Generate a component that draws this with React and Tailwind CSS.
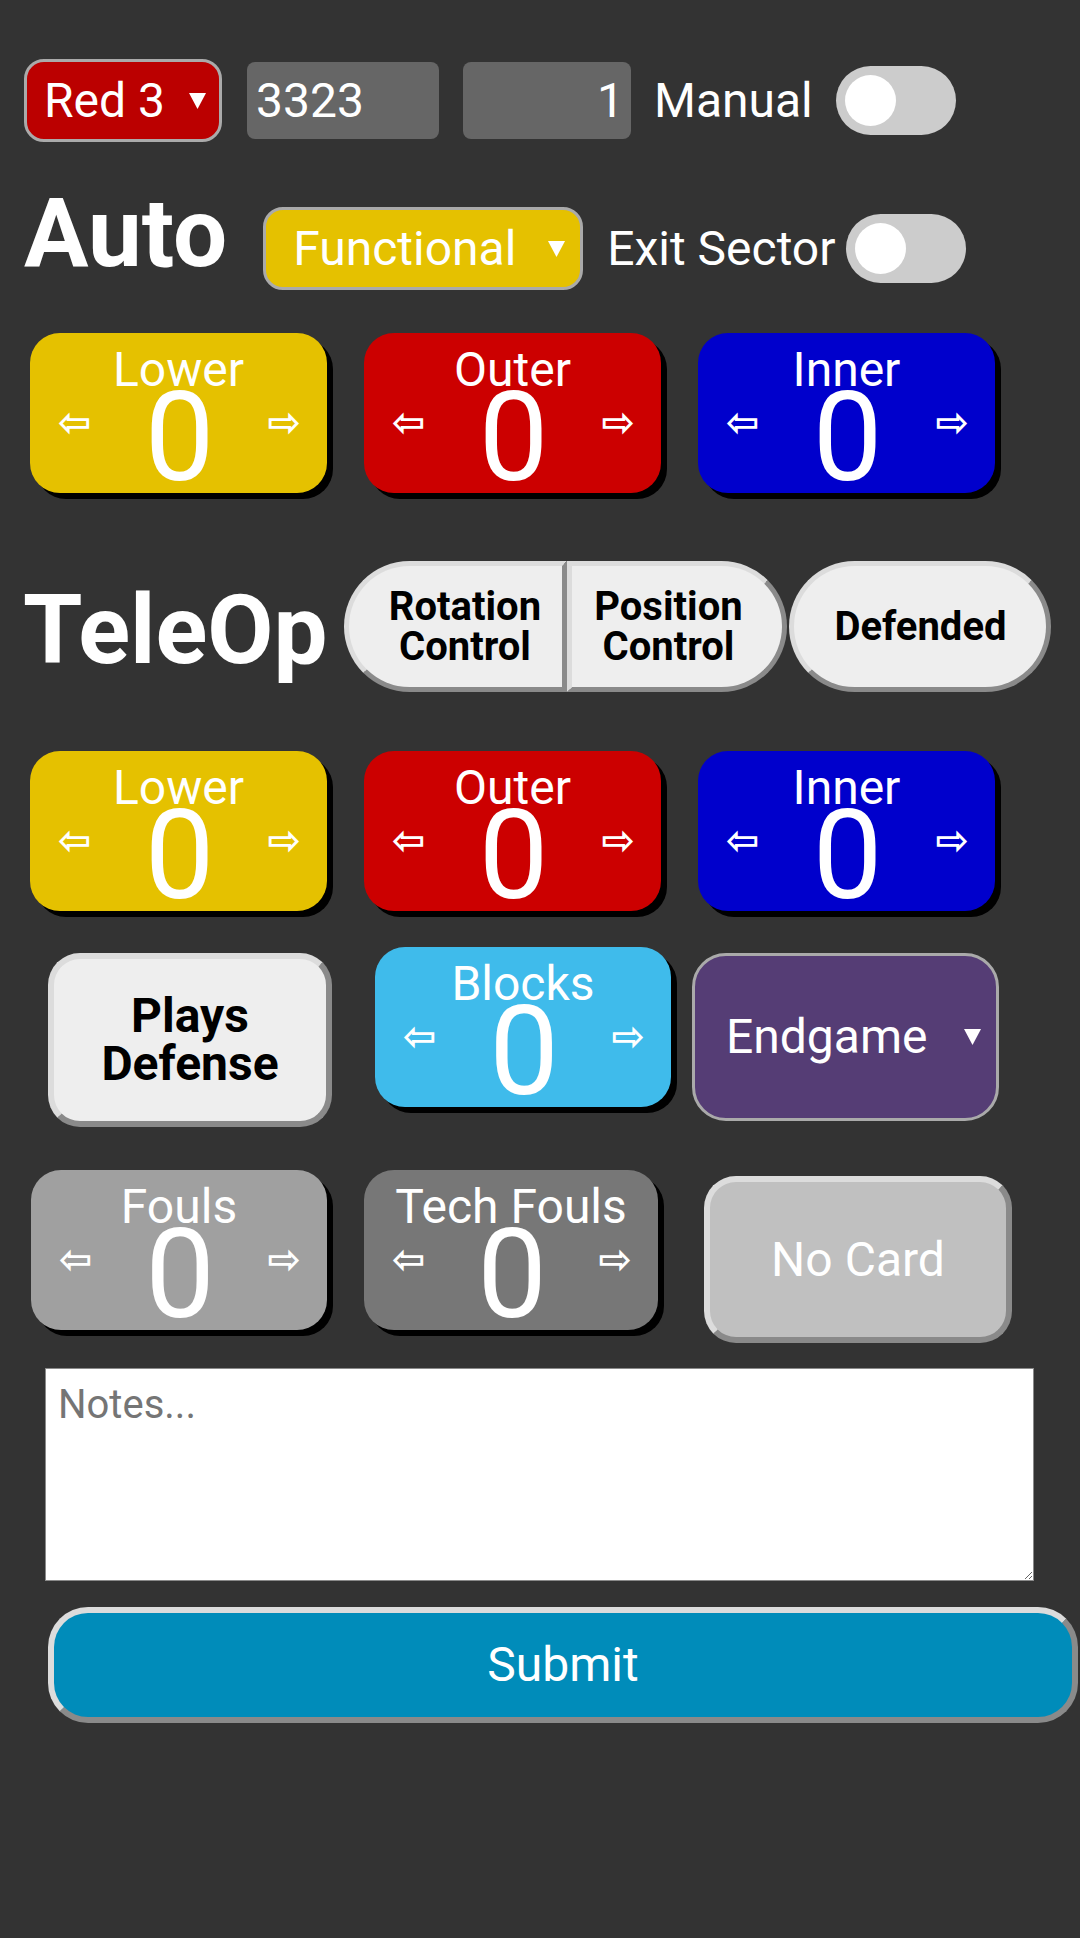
import React from "react";

const arrowCls =
  "font-['DejaVu_Sans',sans-serif] font-bold text-[40px] leading-none -mt-[32px]";

function Tri() {
  return (
    <svg width="17" height="16" viewBox="0 0 17 16" className="shrink-0">
      <polygon points="0,0 17,0 8.5,16" fill="#ffffff" />
    </svg>
  );
}

function Toggle() {
  return (
    <div className="flex h-[69px] w-[120px] shrink-0 items-center rounded-full bg-[#cccccc] pl-[9px]">
      <div className="h-[51px] w-[51px] rounded-full bg-white" />
    </div>
  );
}

function Counter({ label, bg, w, extra }) {
  return (
    <div
      className={`flex h-[160px] shrink-0 flex-col items-center rounded-[30px] pt-[9px] text-white shadow-[6px_6px_0_0_#000] ${bg} ${w} ${extra || ""}`}
    >
      <div className="text-[48px] leading-[56px] whitespace-nowrap">{label}</div>
      <div className="flex w-full items-center justify-between pl-[28px] pr-[26px]">
        <span className={arrowCls}>⇦</span>
        <span className="text-[124px] leading-[80px]">0</span>
        <span className={arrowCls}>⇨</span>
      </div>
    </div>
  );
}

const outset =
  "border-solid border-t-[#dcdcdc] border-l-[#dcdcdc] border-r-[#8a8a8a] border-b-[#8a8a8a]";

export default function App() {
  return (
    <div className="min-h-[1938px] w-[1080px] overflow-hidden bg-[#333333] font-['Roboto','Liberation_Sans',sans-serif] text-white">
      {/* Row 1 */}
      <div className="flex items-center pl-[24px] pt-[59px]">
        <div className="flex h-[83px] w-[198px] items-center justify-between rounded-[20px] border-[3px] border-[#aaaaaa] bg-[#bb0000] pl-[17px] pr-[13px] text-[48px]">
          <span>Red 3</span>
          <Tri />
        </div>
        <div className="ml-[25px] flex h-[77px] w-[192px] items-center rounded-[8px] bg-[#666666] pl-[9px] text-[48px]">
          3323
        </div>
        <div className="ml-[24px] flex h-[77px] w-[168px] items-center justify-end rounded-[8px] bg-[#666666] pr-[7px] text-[48px]">
          1
        </div>
        <span className="ml-[23px] text-[48px]">Manual</span>
        <div className="ml-[23px]">
          <Toggle />
        </div>
      </div>

      {/* Row 2 */}
      <div className="mt-[65px] flex items-center pl-[24px]">
        <h1 className="-mt-[30px] text-[96px] font-bold leading-[83px]">Auto</h1>
        <div className="ml-[36px] flex h-[83px] w-[320px] items-center justify-between rounded-[20px] border-[3px] border-[#aaaaaa] bg-[#e5c100] pl-[27px] pr-[15px] text-[48px]">
          <span>Functional</span>
          <Tri />
        </div>
        <span className="ml-[24px] text-[48px] whitespace-nowrap">Exit Sector</span>
        <div className="ml-[10px]">
          <Toggle />
        </div>
      </div>

      {/* Auto counters */}
      <div className="mt-[43px] flex gap-[37px] pl-[30px]">
        <Counter label="Lower" bg="bg-[#e5c100]" w="w-[297px]" />
        <Counter label="Outer" bg="bg-[#cc0000]" w="w-[297px]" />
        <Counter label="Inner" bg="bg-[#0000cc]" w="w-[297px]" />
      </div>

      {/* TeleOp row */}
      <div className="mt-[68px] flex items-center pl-[23px]">
        <h1 className="mt-[6px] text-[96px] font-bold leading-none">TeleOp</h1>
        <div className="ml-[17px] flex gap-[2px]">
          <div className="flex">
            <button
              className={`h-[131px] w-[223px] rounded-l-full border-[5px] ${outset} bg-[#eeeeee] pl-[38px] pr-[20px] text-center text-[40px] font-bold leading-[40px] text-black`}
            >
              Rotation
              <br />
              Control
            </button>
            <button
              className={`h-[131px] w-[220px] rounded-r-full border-[5px] ${outset} bg-[#eeeeee] pl-[20px] pr-[38px] text-center text-[40px] font-bold leading-[40px] text-black`}
            >
              Position
              <br />
              Control
            </button>
          </div>
          <button
            className={`h-[131px] w-[262px] rounded-full border-[5px] ${outset} bg-[#eeeeee] text-center text-[40px] font-bold leading-[40px] text-black`}
          >
            Defended
          </button>
        </div>
      </div>

      {/* TeleOp counters */}
      <div className="mt-[59px] flex gap-[37px] pl-[30px]">
        <Counter label="Lower" bg="bg-[#e5c100]" w="w-[297px]" />
        <Counter label="Outer" bg="bg-[#cc0000]" w="w-[297px]" />
        <Counter label="Inner" bg="bg-[#0000cc]" w="w-[297px]" />
      </div>

      {/* Row 3 */}
      <div className="mt-[36px] flex items-start">
        <button
          className={`ml-[48px] mt-[6px] h-[174px] w-[284px] shrink-0 rounded-[32px] border-[6px] ${outset} bg-[#eeeeee] text-center text-[48px] font-bold leading-[48px] text-black`}
        >
          Plays
          <br />
          Defense
        </button>
        <Counter label="Blocks" bg="bg-[#3fbbeb]" w="w-[296px]" extra="ml-[43px]" />
        <div className="ml-[21px] mt-[6px] flex h-[168px] w-[307px] shrink-0 items-center justify-between rounded-[34px] border-[3px] border-[#aaaaaa] bg-[#553d75] pl-[31px] pr-[15px] text-[48px]">
          <span>Endgame</span>
          <Tri />
        </div>
      </div>

      {/* Row 4 */}
      <div className="mt-[43px] flex items-start">
        <Counter label="Fouls" bg="bg-[#a0a0a0]" w="w-[296px]" extra="ml-[31px]" />
        <Counter label="Tech Fouls" bg="bg-[#777777]" w="w-[294px]" extra="ml-[37px]" />
        <button
          className={`ml-[46px] mt-[6px] h-[167px] w-[308px] shrink-0 rounded-[32px] border-[6px] ${outset} bg-[#c0c0c0] text-center text-[48px] text-white`}
        >
          No Card
        </button>
      </div>

      {/* Notes */}
      <textarea
        placeholder="Notes..."
        className="mt-[25px] ml-[45px] block h-[213px] w-[989px] border border-solid border-[#8a8a8a] bg-white pl-[12px] pt-[6px] text-[40px] text-black placeholder:text-[#757575]"
      />

      {/* Submit */}
      <button
        className={`mt-[26px] ml-[48px] block h-[116px] w-[1030px] rounded-[40px] border-[6px] ${outset} bg-[#008cba] text-center text-[48px] text-white`}
      >
        Submit
      </button>
    </div>
  );
}
